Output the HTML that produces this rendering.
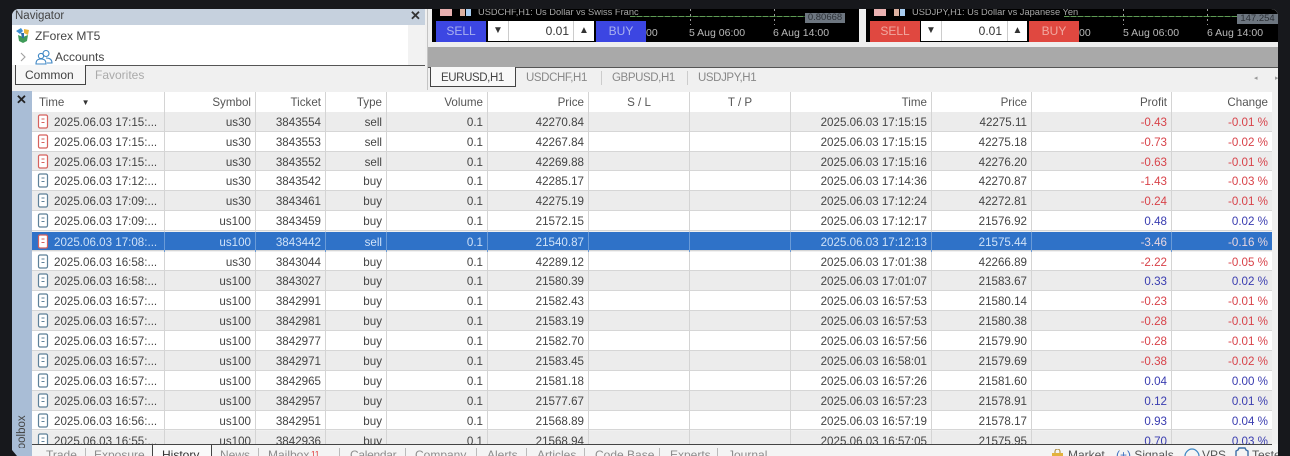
<!DOCTYPE html>
<html><head><meta charset="utf-8"><style>
html,body{margin:0;padding:0;background:#17181c}
#p{position:relative;width:1290px;height:456px;overflow:hidden;background:#17181c;font-family:"Liberation Sans",sans-serif;font-size:11.6px;color:#444;filter:blur(.35px)}
.a{position:absolute;white-space:nowrap}
.r,.h{position:absolute;left:32px;width:1240px;display:grid;grid-template-columns:133px 91px 70px 61px 101px 101px 101px 101px 141px 100px 140px 100px;box-sizing:border-box}
.r{height:19.8px;line-height:21px;background:#fff;border-bottom:1px solid #d6d6d6}
.r.g{background:#ececec}
.r.s{background:#2f72c8;color:#cfe2f8}
.r>span,.h>span{text-align:right;padding-right:4px;border-right:1px solid #d4d4d4;white-space:nowrap}
.r>span:first-child{text-align:left;padding-left:22px;padding-right:0;position:relative}
.r.s>span{border-right-color:#6a9bd8}
.r svg{position:absolute;left:5px;top:2px}
.h{top:92px;height:20px;line-height:21px;background:#fff;color:#555}
.h>span:first-child{text-align:left;padding-left:7px}
.n{color:#d8434a}.b{color:#3a3db0}
.r.s .n{color:#e8d6e0}
.tab{position:absolute;top:448px;font-size:12px;line-height:14px;color:#8c8c8c;white-space:nowrap}
.sep{position:absolute;top:448px;width:1px;height:8px;background:#bbb}
.tt{position:absolute;top:72px;font-size:11.5px;letter-spacing:-.4px;color:#888;white-space:nowrap}
.chart{position:absolute;top:9px;height:33px;background:#000;overflow:hidden}
.btn{position:absolute;top:21px;height:21px;line-height:21px;text-align:center;font-size:12px}
.sp{position:absolute;top:21px;height:20px;background:#fff;line-height:20px;color:#333;font-size:12px;box-sizing:border-box}
.lb{position:absolute;top:27px;font-size:10.5px;color:#b9b9b9;white-space:nowrap}
.gl{position:absolute;top:7px;height:1px;width:190px;left:190px;background:repeating-linear-gradient(90deg,#5f9a55 0 5px,#2e5a2a 5px 7px)}
.vd{position:absolute;top:9px;width:1px;height:16px;background:repeating-linear-gradient(180deg,#999 0 2px,#000 2px 5px)}
</style></head><body><div id="p">
<!-- window -->
<div class="a" style="left:12px;top:9px;width:1266px;height:447px;background:#f0f0f0;border-radius:7px 7px 0 0"></div>
<!-- navigator -->
<div class="a" style="left:12px;top:9px;width:413px;height:16px;background:#c6d1de;border-radius:7px 0 0 0"></div>
<div class="a" style="left:15px;top:8px;font-size:11.5px;line-height:16px;color:#444">Navigator</div>
<div class="a" style="left:410px;top:9px;font-size:13px;line-height:14px;font-weight:bold;color:#333">✕</div>
<div class="a" style="left:12px;top:25px;width:396px;height:40px;background:#fff"></div>
<div class="a" style="left:408px;top:25px;width:17px;height:40px;background:#f2f2f2"></div>
<svg class="a" style="left:15px;top:27px" width="16" height="17" viewBox="0 0 16 17"><path d="M1 4 6 1l2 3-3 3z" fill="#3d8fd0"/><path d="M9 2l5 1-1 5-4-2z" fill="#e8b43a"/><path d="M3 8l5 2 5-2-1 6-4 2-4-2z" fill="#3f9b58"/><path d="M6 6l3 0 0 5-2 0z" fill="#2f6fa8"/></svg>
<div class="a" style="left:35px;top:29px;font-size:12px;line-height:14px;color:#444">ZForex MT5</div>
<svg class="a" style="left:19px;top:51px" width="10" height="12" viewBox="0 0 10 12"><path d="M2 2l4 4-4 4" fill="none" stroke="#a0a0a0" stroke-width="1.1"/></svg>
<svg class="a" style="left:35px;top:49px" width="18" height="16" viewBox="0 0 18 16" fill="none" stroke="#3f87c4" stroke-width="1.1"><circle cx="11" cy="4.5" r="3"/><circle cx="6" cy="7" r="2.6"/><path d="M1 15c0-4 2-5 5-5s5 1 5 5zM11 9c3 0 6 1 6 5h-5"/></svg>
<div class="a" style="left:55px;top:50px;font-size:12px;line-height:14px;color:#444">Accounts</div>
<div class="a" style="left:12px;top:65px;width:413px;height:25px;background:#f0f0f0"></div>
<div class="a" style="left:15px;top:65px;width:410px;height:1px;background:#555"></div>
<div class="a" style="left:15px;top:65px;width:69px;height:19px;background:#f7f7f7;border:1px solid #444;border-top:0;box-sizing:content-box"></div>
<div class="a" style="left:25px;top:68px;font-size:12px;line-height:14px;color:#444">Common</div>
<div class="a" style="left:95px;top:68px;font-size:12px;line-height:14px;color:#aaa">Favorites</div>
<div class="a" style="left:427px;top:9px;width:1px;height:81px;background:#c4c4c4"></div>
<div class="a" style="left:428px;top:9px;width:850px;height:38px;background:#eee;border-radius:0 7px 0 0"></div>
<!-- chart 1 -->
<div class="chart" style="left:432px;width:427px"></div>
<div class="vd" style="left:690px"></div><div class="vd" style="left:774px"></div>
<div class="a" style="left:440px;top:9px;width:390px;height:12px;overflow:hidden">
<div class="a" style="left:0;top:0;width:12px;height:7px;background:#e8b0b0"></div>
<div class="a" style="left:20px;top:0;width:5px;height:7px;background:#dcb0a0"></div>
<div class="a" style="left:26px;top:0;width:5px;height:7px;background:#a8cdf0"></div>
<div class="a" style="left:38px;top:-3px;font-size:9.3px;line-height:12px;color:#a8a8a8">USDCHF,H1: Us Dollar vs Swiss Franc</div>
<div class="gl"></div></div>
<div class="a" style="left:805px;top:13px;width:40px;height:10px;background:#6d7680;color:#2c3036;font-size:9.5px;line-height:10px;text-align:center">0.80668</div>
<div class="btn" style="left:436px;width:50px;background:#3c46e2;color:#a9b0ee">SELL</div>
<div class="sp" style="left:488px;width:20px;text-align:center;font-size:10px">▼</div>
<div class="sp" style="left:508px;width:66px;text-align:right;padding-right:4px;border-left:1px solid #ccc;border-right:1px solid #ccc">0.01</div>
<div class="sp" style="left:574px;width:20px;text-align:center;font-size:10px">▲</div>
<div class="btn" style="left:596px;width:50px;background:#3c46e2;color:#a9b0ee">BUY</div>
<div class="lb" style="left:646px">00</div>
<div class="lb" style="left:689px">5 Aug 06:00</div>
<div class="lb" style="left:773px">6 Aug 14:00</div>
<!-- chart 2 -->
<div class="chart" style="left:866px;width:412px;border-radius:0 7px 0 0"></div>
<div class="vd" style="left:1123px"></div><div class="vd" style="left:1207px"></div>
<div class="a" style="left:874px;top:9px;width:363px;height:12px;overflow:hidden">
<div class="a" style="left:0;top:0;width:12px;height:7px;background:#e8b0b0"></div>
<div class="a" style="left:20px;top:0;width:5px;height:7px;background:#dcb0a0"></div>
<div class="a" style="left:26px;top:0;width:5px;height:7px;background:#a8cdf0"></div>
<div class="a" style="left:38px;top:-3px;font-size:9.3px;line-height:12px;color:#a8a8a8">USDJPY,H1: Us Dollar vs Japanese Yen</div>
<div class="gl"></div></div>
<div class="a" style="left:1237px;top:14px;width:41px;height:10px;background:#6d7680;color:#2c3036;font-size:9.5px;line-height:10px;text-align:center">147.254</div>
<div class="btn" style="left:870px;width:50px;background:#e04840;color:#f0a8a0">SELL</div>
<div class="sp" style="left:921px;width:20px;text-align:center;font-size:10px">▼</div>
<div class="sp" style="left:941px;width:67px;text-align:right;padding-right:5px;border-left:1px solid #ccc;border-right:1px solid #ccc">0.01</div>
<div class="sp" style="left:1008px;width:19px;text-align:center;font-size:10px">▲</div>
<div class="btn" style="left:1029px;width:50px;background:#e04840;color:#f0a8a0">BUY</div>
<div class="lb" style="left:1079px">00</div>
<div class="lb" style="left:1123px">5 Aug 06:00</div>
<div class="lb" style="left:1207px">6 Aug 14:00</div>
<!-- gray band -->
<div class="a" style="left:428px;top:47px;width:850px;height:20px;background:#a9a9a9"></div>
<div class="a" style="left:428px;top:67px;width:850px;height:1px;background:#555"></div>
<div class="a" style="left:428px;top:68px;width:850px;height:22px;background:#f0f0f0"></div>
<div class="a" style="left:430px;top:67px;width:84px;height:19px;background:#f8f8f8;border:1px solid #444;border-top:0"></div>
<div class="tt" style="left:441px;color:#444">EURUSD,H1</div>
<div class="tt" style="left:526px">USDCHF,H1</div>
<div class="a" style="left:601px;top:71px;width:1px;height:14px;background:#ccc"></div>
<div class="tt" style="left:612px">GBPUSD,H1</div>
<div class="a" style="left:687px;top:71px;width:1px;height:14px;background:#ccc"></div>
<div class="tt" style="left:698px">USDJPY,H1</div>
<div class="a" style="left:1254px;top:74px;font-size:7px;color:#999">◂</div>
<div class="a" style="left:1275px;top:74px;font-size:7px;color:#999">▸</div>
<!-- left strip -->
<div class="a" style="left:12px;top:91px;width:20px;height:365px;background:#a9bdd6"></div>
<div class="a" style="left:16px;top:93px;font-size:13px;line-height:14px;font-weight:bold;color:#222">✕</div>
<div class="a" style="left:15px;top:455px;font-size:11.5px;line-height:14px;color:#444;transform:rotate(-90deg);transform-origin:0 0">Toolbox</div>
<div class="a" style="left:12px;top:448px;width:20px;height:8px;background:#a9bdd6"></div>
<div class="a" style="left:12px;top:450px;width:5px;height:6px;background:#17181c;clip-path:polygon(0 0,100% 100%,0 100%)"></div>
<!-- header -->
<div class="h"><span>Time <span style="font-size:8px;margin-left:14px;vertical-align:1px;color:#333">▼</span></span><span>Symbol</span><span>Ticket</span><span>Type</span><span>Volume</span><span>Price</span><span style="text-align:center;padding:0">S / L</span><span style="text-align:center;padding:0">T / P</span><span>Time</span><span>Price</span><span>Profit</span><span style="border:0">Change</span></div>
<svg width="0" height="0" style="position:absolute"><defs>
<g id="i"><rect x="1.5" y="1" width="9" height="13" rx="1.5" fill="#fff" stroke="#5e8199" stroke-width="1.2"/><path d="M4.5 5h3M4.5 8.5h3" stroke="#5e8199" stroke-width="1.1"/></g>
<g id="j"><rect x="1.5" y="1" width="9" height="13" rx="1.5" fill="#fff" stroke="#d6625e" stroke-width="1.2"/><path d="M4.5 5h3M4.5 8.5h3" stroke="#d6625e" stroke-width="1.1"/></g>
</defs></svg>
<!-- rows -->
<div class="r g" style="top:112px"><span><svg width="12" height="15"><use href="#j"/></svg>2025.06.03 17:15:...</span><span>us30</span><span>3843554</span><span>sell</span><span>0.1</span><span>42270.84</span><span></span><span></span><span>2025.06.03 17:15:15</span><span>42275.11</span><span class="n">-0.43</span><span class="n" style="border:0">-0.01 %</span></div>
<div class="r" style="top:131.8px"><span><svg width="12" height="15"><use href="#j"/></svg>2025.06.03 17:15:...</span><span>us30</span><span>3843553</span><span>sell</span><span>0.1</span><span>42267.84</span><span></span><span></span><span>2025.06.03 17:15:15</span><span>42275.18</span><span class="n">-0.73</span><span class="n" style="border:0">-0.02 %</span></div>
<div class="r g" style="top:151.6px"><span><svg width="12" height="15"><use href="#j"/></svg>2025.06.03 17:15:...</span><span>us30</span><span>3843552</span><span>sell</span><span>0.1</span><span>42269.88</span><span></span><span></span><span>2025.06.03 17:15:16</span><span>42276.20</span><span class="n">-0.63</span><span class="n" style="border:0">-0.01 %</span></div>
<div class="r" style="top:171.4px"><span><svg width="12" height="15"><use href="#i"/></svg>2025.06.03 17:12:...</span><span>us30</span><span>3843542</span><span>buy</span><span>0.1</span><span>42285.17</span><span></span><span></span><span>2025.06.03 17:14:36</span><span>42270.87</span><span class="n">-1.43</span><span class="n" style="border:0">-0.03 %</span></div>
<div class="r g" style="top:191.2px"><span><svg width="12" height="15"><use href="#i"/></svg>2025.06.03 17:09:...</span><span>us30</span><span>3843461</span><span>buy</span><span>0.1</span><span>42275.19</span><span></span><span></span><span>2025.06.03 17:12:24</span><span>42272.81</span><span class="n">-0.24</span><span class="n" style="border:0">-0.01 %</span></div>
<div class="r" style="top:211.4px"><span><svg width="12" height="15"><use href="#i"/></svg>2025.06.03 17:09:...</span><span>us100</span><span>3843459</span><span>buy</span><span>0.1</span><span>21572.15</span><span></span><span></span><span>2025.06.03 17:12:17</span><span>21576.92</span><span class="b">0.48</span><span class="b" style="border:0">0.02 %</span></div>
<div class="r s" style="top:231.6px"><span><svg width="12" height="15"><use href="#j"/></svg>2025.06.03 17:08:...</span><span>us100</span><span>3843442</span><span>sell</span><span>0.1</span><span>21540.87</span><span></span><span></span><span>2025.06.03 17:12:13</span><span>21575.44</span><span class="n">-3.46</span><span class="n" style="border:0">-0.16 %</span></div>
<div class="r" style="top:251.5px"><span><svg width="12" height="15"><use href="#i"/></svg>2025.06.03 16:58:...</span><span>us30</span><span>3843044</span><span>buy</span><span>0.1</span><span>42289.12</span><span></span><span></span><span>2025.06.03 17:01:38</span><span>42266.89</span><span class="n">-2.22</span><span class="n" style="border:0">-0.05 %</span></div>
<div class="r g" style="top:271.4px"><span><svg width="12" height="15"><use href="#i"/></svg>2025.06.03 16:58:...</span><span>us100</span><span>3843027</span><span>buy</span><span>0.1</span><span>21580.39</span><span></span><span></span><span>2025.06.03 17:01:07</span><span>21583.67</span><span class="b">0.33</span><span class="b" style="border:0">0.02 %</span></div>
<div class="r" style="top:291.3px"><span><svg width="12" height="15"><use href="#i"/></svg>2025.06.03 16:57:...</span><span>us100</span><span>3842991</span><span>buy</span><span>0.1</span><span>21582.43</span><span></span><span></span><span>2025.06.03 16:57:53</span><span>21580.14</span><span class="n">-0.23</span><span class="n" style="border:0">-0.01 %</span></div>
<div class="r g" style="top:311.2px"><span><svg width="12" height="15"><use href="#i"/></svg>2025.06.03 16:57:...</span><span>us100</span><span>3842981</span><span>buy</span><span>0.1</span><span>21583.19</span><span></span><span></span><span>2025.06.03 16:57:53</span><span>21580.38</span><span class="n">-0.28</span><span class="n" style="border:0">-0.01 %</span></div>
<div class="r" style="top:331.1px"><span><svg width="12" height="15"><use href="#i"/></svg>2025.06.03 16:57:...</span><span>us100</span><span>3842977</span><span>buy</span><span>0.1</span><span>21582.70</span><span></span><span></span><span>2025.06.03 16:57:56</span><span>21579.90</span><span class="n">-0.28</span><span class="n" style="border:0">-0.01 %</span></div>
<div class="r g" style="top:351px"><span><svg width="12" height="15"><use href="#i"/></svg>2025.06.03 16:57:...</span><span>us100</span><span>3842971</span><span>buy</span><span>0.1</span><span>21583.45</span><span></span><span></span><span>2025.06.03 16:58:01</span><span>21579.69</span><span class="n">-0.38</span><span class="n" style="border:0">-0.02 %</span></div>
<div class="r" style="top:370.9px"><span><svg width="12" height="15"><use href="#i"/></svg>2025.06.03 16:57:...</span><span>us100</span><span>3842965</span><span>buy</span><span>0.1</span><span>21581.18</span><span></span><span></span><span>2025.06.03 16:57:26</span><span>21581.60</span><span class="b">0.04</span><span class="b" style="border:0">0.00 %</span></div>
<div class="r g" style="top:390.8px"><span><svg width="12" height="15"><use href="#i"/></svg>2025.06.03 16:57:...</span><span>us100</span><span>3842957</span><span>buy</span><span>0.1</span><span>21577.67</span><span></span><span></span><span>2025.06.03 16:57:23</span><span>21578.91</span><span class="b">0.12</span><span class="b" style="border:0">0.01 %</span></div>
<div class="r" style="top:410.7px"><span><svg width="12" height="15"><use href="#i"/></svg>2025.06.03 16:56:...</span><span>us100</span><span>3842951</span><span>buy</span><span>0.1</span><span>21568.89</span><span></span><span></span><span>2025.06.03 16:57:19</span><span>21578.17</span><span class="b">0.93</span><span class="b" style="border:0">0.04 %</span></div>
<div class="r g" style="top:430.6px;height:14px"><span><svg width="12" height="15"><use href="#i"/></svg>2025.06.03 16:55:...</span><span>us100</span><span>3842936</span><span>buy</span><span>0.1</span><span>21568.94</span><span></span><span></span><span>2025.06.03 16:57:05</span><span>21575.95</span><span class="b">0.70</span><span class="b" style="border:0">0.03 %</span></div>
<!-- bottom tabs -->
<div class="a" style="left:32px;top:444px;width:1246px;height:12px;background:#f4f4f4"></div>
<div class="a" style="left:32px;top:444px;width:1240px;height:1px;background:#444"></div>
<div class="a" style="left:152px;top:444px;width:58px;height:12px;background:#fafafa;border:1px solid #444;border-bottom:0"></div>
<div class="tab" style="left:46px">Trade</div><div class="sep" style="left:85px"></div>
<div class="tab" style="left:94px">Exposure</div>
<div class="tab" style="left:162px;color:#333">History</div>
<div class="tab" style="left:220px">News</div><div class="sep" style="left:258px"></div>
<div class="tab" style="left:268px">Mailbox</div><div class="a" style="left:311px;top:450px;font-size:8px;color:#d33">11</div><div class="sep" style="left:339px"></div>
<div class="tab" style="left:350px;letter-spacing:-.3px">Calendar</div><div class="sep" style="left:405px"></div>
<div class="tab" style="left:415px">Company</div><div class="sep" style="left:476px"></div>
<div class="tab" style="left:487px">Alerts</div><div class="sep" style="left:526px"></div>
<div class="tab" style="left:537px">Articles</div><div class="sep" style="left:584px"></div>
<div class="tab" style="left:595px">Code Base</div><div class="sep" style="left:659px"></div>
<div class="tab" style="left:670px">Experts</div><div class="sep" style="left:717px"></div>
<div class="tab" style="left:728px">Journal</div>
<svg class="a" style="left:1051px;top:449px" width="13" height="7"><path d="M1 4h11v3H1z" fill="#e3b23c"/><path d="M4 4V2.5a2.5 2.5 0 0 1 5 0V4" fill="none" stroke="#a8842c"/></svg>
<div class="tab" style="left:1068px;color:#555">Market</div>
<div class="tab" style="left:1116px;color:#555"><span style="color:#3f6fc0">(+)</span> Signals</div>
<svg class="a" style="left:1184px;top:448px" width="16" height="8"><path d="M1 8c0-3 3-7 7-7s7 4 7 7" fill="none" stroke="#3f87c4" stroke-width="1.3"/></svg>
<div class="tab" style="left:1202px;color:#555">VPS</div>
<svg class="a" style="left:1234px;top:447px" width="16" height="9"><path d="M2 9V4l2-1 1-2h6l1 2 2 1v5" fill="none" stroke="#3f6fa8" stroke-width="1.4"/></svg>
<div class="tab" style="left:1252px;color:#555">Tester</div>
<div class="a" style="left:1278px;top:0;width:12px;height:456px;background:#17181c"></div>
<div class="a" style="left:0;top:0;width:12px;height:456px;background:#17181c"></div>
</div></body></html>
